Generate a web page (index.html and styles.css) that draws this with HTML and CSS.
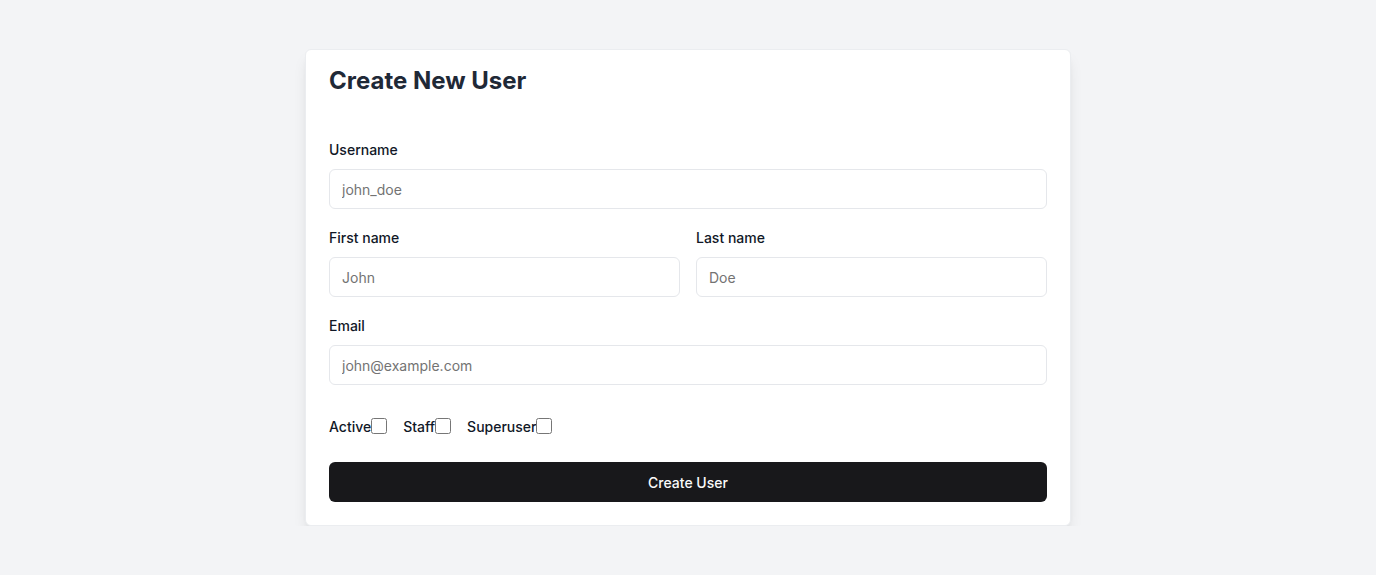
FILE: index.html
```html
<!DOCTYPE html>
<html>
<head>
<meta charset="utf-8">
<link rel="stylesheet" href="styles.css">
</head>
<body>
<div class="page">
  <form class="card">
    <h1 class="title">Create New User</h1>
    <div class="fields">
      <div class="field">
        <label class="label">Username</label>
        <input class="input" placeholder="john_doe">
      </div>
      <div class="row">
        <div class="field">
          <label class="label">First name</label>
          <input class="input" placeholder="John">
        </div>
        <div class="field">
          <label class="label">Last name</label>
          <input class="input" placeholder="Doe">
        </div>
      </div>
      <div class="field">
        <label class="label">Email</label>
        <input class="input" placeholder="john@example.com">
      </div>
    </div>
    <div class="checks">
      <label class="check">Active<input type="checkbox" class="box"></label>
      <label class="check">Staff<input type="checkbox" class="box"></label>
      <label class="check">Superuser<input type="checkbox" class="box"></label>
    </div>
    <button type="button" class="button">Create User</button>
  </form>
</div>
</body>
</html>
```
FILE: styles.css
```css
* { box-sizing: border-box; }
html, body { margin: 0; padding: 0; }
body {
  background: #f3f4f6;
  font-family: Inter, "Noto Sans", sans-serif;
  color: #111827;
}
.page {
  display: flex;
  justify-content: center;
  padding-top: 49px;
}
.card {
  width: 766px;
  background: #fff;
  border: 1px solid #ebedf0;
  border-radius: 6px;
  box-shadow: 0 10px 15px -3px rgba(0,0,0,0.1), 0 4px 6px -4px rgba(0,0,0,0.1);
  padding: 15px 23px 23px;
  display: flex;
  flex-direction: column;
}
.title {
  margin: 0;
  font-size: 24px;
  line-height: 32px;
  font-weight: 700;
  color: #1f2937;
}
.fields {
  margin-top: 43px;
  display: flex;
  flex-direction: column;
  gap: 19px;
}
.row {
  display: grid;
  grid-template-columns: 1fr 1fr;
  gap: 16px;
}
.field {
  display: flex;
  flex-direction: column;
  gap: 9px;
}
.label {
  font-size: 14px;
  line-height: 20px;
  font-weight: 500;
  color: #111827;
}
.input {
  height: 40px;
  border: 1px solid #e5e7eb;
  border-radius: 6px;
  padding: 0 12px;
  font-family: inherit;
  font-size: 14px;
  color: #111827;
  outline: none;
}
.input::placeholder { color: #737373; }
.checks {
  margin-top: 32px;
  display: flex;
  gap: 16px;
  align-items: center;
}
.check {
  display: inline-flex;
  align-items: center;
  font-size: 14px;
  line-height: 20px;
  font-weight: 500;
  color: #111827;
}
.box {
  margin: 0;
  width: 16px;
  height: 16px;
  position: relative;
  top: -1px;
}
.button {
  margin-top: 25px;
  height: 40px;
  border: none;
  border-radius: 6px;
  background: #18181b;
  color: #fafafa;
  font-family: inherit;
  font-size: 14px;
  font-weight: 500;
}
```
